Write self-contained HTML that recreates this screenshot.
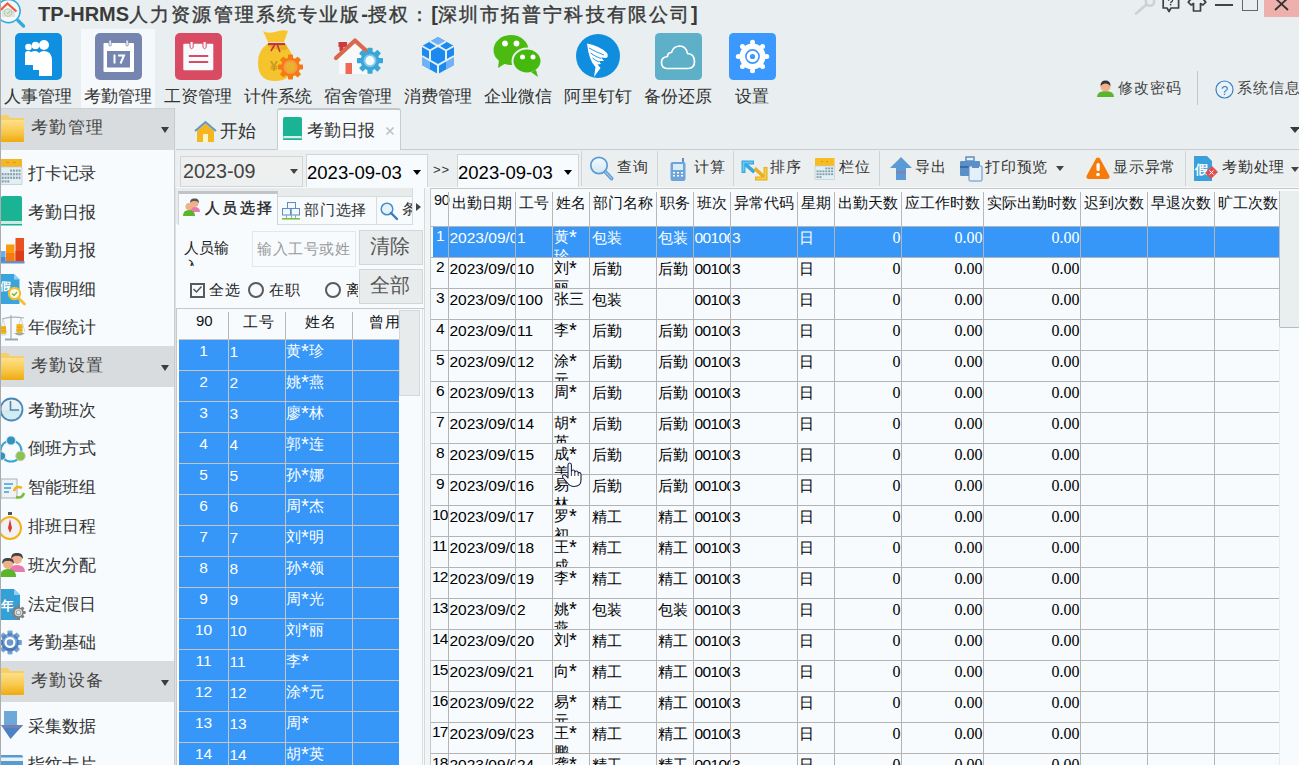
<!DOCTYPE html><html><head><meta charset="utf-8"><style>
*{box-sizing:border-box;margin:0;padding:0}
html,body{width:1299px;height:765px;overflow:hidden}
body{position:relative;background:#e9eff0;font-family:"Liberation Sans",sans-serif;color:#333}
.a{position:absolute}
.nw{white-space:nowrap}
svg{position:absolute;overflow:visible}
.rl{position:absolute;top:86.5px;font-size:17px;line-height:19px;color:#333;white-space:nowrap}
.si{position:absolute;left:27.8px;font-size:17px;line-height:19px;color:#333;white-space:nowrap}
.sh{position:absolute;left:1px;width:173px;height:40px;background:#d9dcde}
.sh span{position:absolute;left:29.5px;top:9.5px;font-size:16.5px;line-height:19px;letter-spacing:1.5px;color:#444;white-space:nowrap}
.tri{position:absolute;width:0;height:0;border-left:5px solid transparent;border-right:5px solid transparent;border-top:6px solid #333}
.tb{position:absolute;top:158px;font-size:15px;line-height:18px;letter-spacing:0.8px;color:#333;white-space:nowrap}
.vsep{position:absolute;width:1px;background:#d0d4d6}
.g{position:absolute;overflow:hidden}
.c{position:absolute;overflow:hidden;white-space:nowrap}
.tc{font-size:18.5px;letter-spacing:2.1px;font-weight:normal;-webkit-text-stroke:0.4px #3a3a3a}
.ast{font-size:20px;line-height:0;vertical-align:-1.5px}
</style></head><body>
<svg style="left:0;top:0" width="27" height="30" viewBox="0 0 27 30">
<circle cx="8.5" cy="11" r="11.6" fill="#f4f8fa" stroke="#2eaadc" stroke-width="1.6"/>
<rect x="2" y="9" width="13" height="8" fill="#dde2e8"/>
<path d="M0.5 10 L7.5 3.5 L16.5 11.5" fill="none" stroke="#f05a40" stroke-width="2.2"/>
<circle cx="8" cy="12.5" r="3.8" fill="none" stroke="#8cc43a" stroke-width="0.9" stroke-dasharray="1.2 0.8"/>
<path d="M6.5 12.5 L7.8 13.8 L10 11" fill="none" stroke="#8cc43a" stroke-width="0.8"/>
<path d="M18 20.5 L23.5 26" stroke="#2eaadc" stroke-width="3.4" stroke-linecap="round"/>
</svg>
<div class="a nw" style="left:38px;top:2px;font-size:20px;line-height:24px;font-weight:bold;color:#3a3a3a">TP-HRMS<span class="tc">人力资源管理系统专业版</span>-<span class="tc">授权：</span>[<span class="tc">深圳市拓普宁科技有限公司</span>]</div>
<svg style="left:1134px;top:0" width="22" height="15" viewBox="0 0 22 15">
<path d="M2 13.5 L12 5" stroke="#cfd2d2" stroke-width="2.6" stroke-linecap="round"/><path d="M4.5 9.5 L6.5 11.5 M7 7.5 L9 9.5" stroke="#cfd2d2" stroke-width="1.6"/><circle cx="16" cy="1.5" r="4.2" fill="none" stroke="#cfd2d2" stroke-width="2.6"/>
</svg>
<svg style="left:1162px;top:0" width="19" height="13" viewBox="0 0 19 13">
<path d="M1.2 -2 V8 H5 L7 11.5 L9 8 H16.6 V-2" fill="none" stroke="#404040" stroke-width="1.7" stroke-linejoin="round"/>
<path d="M6.6 0.8 Q6.8 -1.5 8.6 -1.5 Q10.6 -1.5 10.6 0.2 Q10.6 1.4 9 2.2 L8.6 3" fill="none" stroke="#404040" stroke-width="1.3"/><circle cx="8.6" cy="4.6" r="0.9" fill="#404040"/>
</svg>
<svg style="left:1187px;top:0" width="20" height="13" viewBox="0 0 20 13">
<path d="M4.5 -1.5 Q2.5 0.5 1.2 2.2 L4 5 L6.5 3.5 V11 H13.5 V3.5 L16 5 L18.8 2.2 Q17.5 0.5 15.5 -1.5" fill="none" stroke="#404040" stroke-width="1.7" stroke-linejoin="round"/>
</svg>
<div class="a" style="left:1215px;top:4px;width:18px;height:2px;background:#444"></div>
<div class="a" style="left:1242px;top:-2px;width:16px;height:13px;border:1.5px solid #666"></div>
<div class="a" style="left:1264px;top:0;width:35px;height:17px;background:#eeb0ad"></div>
<svg style="left:1272.5px;top:0" width="18" height="11" viewBox="0 0 18 11">
<path d="M2 -2 L15 10 M15 -2 L2 10" stroke="#333" stroke-width="1.8"/>
</svg>
<div class="a" style="left:81px;top:29px;width:74px;height:79px;background:#f6f9fc"></div>
<div class="rl" style="left:3.5px">人事管理</div>
<div class="rl" style="left:83.5px">考勤管理</div>
<div class="rl" style="left:163.5px">工资管理</div>
<div class="rl" style="left:243.5px">计件系统</div>
<div class="rl" style="left:323.5px">宿舍管理</div>
<div class="rl" style="left:403.5px">消费管理</div>
<div class="rl" style="left:483.5px">企业微信</div>
<div class="rl" style="left:563.5px">阿里钉钉</div>
<div class="rl" style="left:643.5px">备份还原</div>
<div class="rl" style="left:734.5px">设置</div>
<svg style="left:15px;top:33px" width="47" height="47" viewBox="0 0 47 47"><rect x="0" y="0" width="47" height="47" rx="5" fill="#0f8fdf"/><circle cx="13.5" cy="14" r="3.3" fill="#fff"/><circle cx="20.5" cy="12.5" r="3.8" fill="#fff"/><circle cx="29" cy="12" r="5" fill="#fff"/>
<path d="M10 21 Q10 18 13 18 Q15 18 16 19 Q18 18 20 18 Q23 18 24 20 Q26 18 29 18 Q37 18 37 28 V43 H24 V37 H18 V32 H10 Z" fill="#fff"/></svg>
<svg style="left:95px;top:33px" width="47" height="47" viewBox="0 0 47 47"><rect x="0" y="0" width="47" height="47" rx="5" fill="#7585b0"/><rect x="8.5" y="10" width="30.5" height="29" rx="1" fill="#fff"/><rect x="14" y="7" width="2.2" height="6" rx="1" fill="#fff" stroke="#7585b0" stroke-width="0.8"/><rect x="31" y="7" width="2.2" height="6" rx="1" fill="#fff" stroke="#7585b0" stroke-width="0.8"/>
<rect x="12" y="18" width="23" height="16.5" fill="#7585b0"/><rect x="18.5" y="21.5" width="2" height="9" fill="#fff"/><path d="M23 22.5 H29 L25.5 30.5" fill="none" stroke="#fff" stroke-width="2"/></svg>
<svg style="left:175px;top:33px" width="47" height="47" viewBox="0 0 47 47"><rect x="0" y="0" width="47" height="47" rx="5" fill="#d94b62"/><rect x="8.3" y="10.7" width="30" height="26.5" rx="1" fill="#f7fbfe"/><path d="M15 9 V14.5 Q16.6 17 18.2 14.5 V9" fill="#f7fbfe" stroke="#d94b62" stroke-width="1"/><path d="M28 9 V14.5 Q29.6 17 31.2 14.5 V9" fill="#f7fbfe" stroke="#d94b62" stroke-width="1"/>
<path d="M14.5 23 H32.5 M14.5 29 H32.5" stroke="#d94b62" stroke-width="1.8" stroke-linecap="round"/></svg>
<svg style="left:240px;top:25px" width="80" height="60" viewBox="0 0 80 60"><path d="M23 6 Q27 9 35 7 Q42 4 48 6 L44 17 H28 Z" fill="#f7c52e"/><path d="M28 19 Q18 24 18 38 Q18 56 35 56 Q52 56 53 40 Q53 24 43 19 Z" fill="#f5c42c"/><path d="M26 19 Q36 28 48 24 L46 19 Z" fill="#e8b020"/><path d="M28 19 H45" stroke="#c8343a" stroke-width="2.2"/><path d="M35 19 L31 26 M37 19 L40 27" stroke="#c8343a" stroke-width="1.6"/><text x="30" y="46" font-size="14" font-weight="bold" fill="#c89a20" font-family="Liberation Sans">¥</text><circle cx="50.5" cy="42" r="9.5" fill="#f67a12"/><rect x="48.0" y="29.5" width="5" height="5.0" rx="0.8" fill="#f67a12" transform="rotate(0.0 50.5 42)"/><rect x="48.0" y="29.5" width="5" height="5.0" rx="0.8" fill="#f67a12" transform="rotate(45.0 50.5 42)"/><rect x="48.0" y="29.5" width="5" height="5.0" rx="0.8" fill="#f67a12" transform="rotate(90.0 50.5 42)"/><rect x="48.0" y="29.5" width="5" height="5.0" rx="0.8" fill="#f67a12" transform="rotate(135.0 50.5 42)"/><rect x="48.0" y="29.5" width="5" height="5.0" rx="0.8" fill="#f67a12" transform="rotate(180.0 50.5 42)"/><rect x="48.0" y="29.5" width="5" height="5.0" rx="0.8" fill="#f67a12" transform="rotate(225.0 50.5 42)"/><rect x="48.0" y="29.5" width="5" height="5.0" rx="0.8" fill="#f67a12" transform="rotate(270.0 50.5 42)"/><rect x="48.0" y="29.5" width="5" height="5.0" rx="0.8" fill="#f67a12" transform="rotate(315.0 50.5 42)"/><circle cx="50.5" cy="42" r="7" fill="#f79a4a"/><circle cx="50.5" cy="42" r="4.8" fill="#e8b42a"/></svg>
<svg style="left:330px;top:35px" width="50" height="45" viewBox="0 0 50 45"><path d="M9 20 L25 5 L42 20 V39 H9 Z" fill="#f7f9fb"/><rect x="8.5" y="7" width="8.5" height="5" fill="#cc3a3a"/><rect x="9.5" y="7" width="4" height="9" fill="#cc3a3a"/><path d="M6 23 L25 5.5 L43 22" fill="none" stroke="#d8694e" stroke-width="4.2" stroke-linejoin="round" stroke-linecap="round"/><rect x="15.5" y="28" width="6.5" height="11" fill="#ee6a55"/><circle cx="40" cy="25.7" r="9.5" fill="#3aa6d8"/><rect x="37.4" y="12.7" width="5.2" height="5.5" rx="0.8" fill="#3aa6d8" transform="rotate(0.0 40 25.7)"/><rect x="37.4" y="12.7" width="5.2" height="5.5" rx="0.8" fill="#3aa6d8" transform="rotate(45.0 40 25.7)"/><rect x="37.4" y="12.7" width="5.2" height="5.5" rx="0.8" fill="#3aa6d8" transform="rotate(90.0 40 25.7)"/><rect x="37.4" y="12.7" width="5.2" height="5.5" rx="0.8" fill="#3aa6d8" transform="rotate(135.0 40 25.7)"/><rect x="37.4" y="12.7" width="5.2" height="5.5" rx="0.8" fill="#3aa6d8" transform="rotate(180.0 40 25.7)"/><rect x="37.4" y="12.7" width="5.2" height="5.5" rx="0.8" fill="#3aa6d8" transform="rotate(225.0 40 25.7)"/><rect x="37.4" y="12.7" width="5.2" height="5.5" rx="0.8" fill="#3aa6d8" transform="rotate(270.0 40 25.7)"/><rect x="37.4" y="12.7" width="5.2" height="5.5" rx="0.8" fill="#3aa6d8" transform="rotate(315.0 40 25.7)"/><circle cx="40" cy="25.7" r="6.5" fill="#7cc8ec"/><circle cx="40" cy="25.7" r="4.6" fill="#f7f9fb"/></svg>
<svg style="left:410px;top:25px" width="60" height="55" viewBox="0 0 60 55"><path d="M28 12 L44 21 V40 L28 49 L12 40 V21 Z" fill="#1a8af0"/><path d="M28 12 L36 16.5 L28 21 L20 16.5 Z" fill="#70b2f5"/><path d="M12 31 L20 35.5 V44.5 L12 40 Z" fill="#70b2f5"/><path d="M44 31 L36 35.5 V44.5 L44 40 Z" fill="#70b2f5"/><g fill="none" stroke="#e9eff0" stroke-width="2"><path d="M20 16.5 L28 21 L36 16.5"/><path d="M12 21 L20 25.5"/><path d="M44 21 L36 25.5"/><path d="M20 25.5 L28 21 L36 25.5"/><path d="M20 25.5 V35.5 L28 40 L36 35.5 V25.5"/><path d="M12 31 L20 35.5"/><path d="M44 31 L36 35.5"/><path d="M28 40 V49"/></g></svg>
<svg style="left:493px;top:34px" width="52" height="44" viewBox="0 0 52 44">
<ellipse cx="18" cy="16" rx="17.5" ry="15" fill="#4bbb12"/><path d="M6 26 L5 34 L13 29 Z" fill="#4bbb12"/>
<ellipse cx="34" cy="27" rx="14.5" ry="12.5" fill="#45b90e" stroke="#e9eff0" stroke-width="2"/><path d="M43 36 L45 43 L38 38 Z" fill="#45b90e"/>
<circle cx="12" cy="9.5" r="2.9" fill="#fff"/><circle cx="23.5" cy="9.5" r="2.9" fill="#fff"/>
<circle cx="29.5" cy="23" r="2.5" fill="#fff"/><circle cx="40" cy="23" r="2.5" fill="#fff"/>
</svg>
<svg style="left:576px;top:34px" width="44" height="44" viewBox="0 0 44 44">
<circle cx="22" cy="22" r="22" fill="#0f8ee0"/>
<path d="M11 9.5 Q24 12 31 19 Q33 23 30 24 L25 23.5 L28 27 L23 27 L25 30 L21.5 30.5 L24.5 34 L18 43 L19.5 33 Q13 27 11 9.5 Z" fill="#fff"/><path d="M13 14 Q20 18 28 21 M14.5 19 Q20 23 25 24.5 M16.5 24 Q20 27 23 28" fill="none" stroke="#0f8ee0" stroke-width="0.9"/>
</svg>
<svg style="left:655px;top:33px" width="47" height="47" viewBox="0 0 47 47"><rect width="47" height="47" rx="4.5" fill="#5eb0c8"/><path d="M12 35.5 Q6.5 35.5 6.5 29.5 Q6.5 24 12.5 23.5 Q12.5 19.5 16.5 19.5 Q18 13.5 24.5 13 Q31 13 32.5 20.5 Q39.5 21 39.5 28.5 Q39.5 35.5 33 35.5 Z" fill="none" stroke="#fff" stroke-width="1.7" stroke-linejoin="round"/></svg>
<svg style="left:729px;top:33px" width="47" height="47" viewBox="0 0 47 47"><rect width="47" height="47" rx="4.5" fill="#3a98fe"/><circle cx="23.5" cy="23.5" r="13" fill="#fff"/><circle cx="23.50" cy="9.30" r="2.5" fill="#fff"/><circle cx="33.54" cy="13.46" r="2.5" fill="#fff"/><circle cx="37.70" cy="23.50" r="2.5" fill="#fff"/><circle cx="33.54" cy="33.54" r="2.5" fill="#fff"/><circle cx="23.50" cy="37.70" r="2.5" fill="#fff"/><circle cx="13.46" cy="33.54" r="2.5" fill="#fff"/><circle cx="9.30" cy="23.50" r="2.5" fill="#fff"/><circle cx="13.46" cy="13.46" r="2.5" fill="#fff"/><circle cx="23.5" cy="23.5" r="6.6" fill="none" stroke="#3a98fe" stroke-width="1.6"/><circle cx="23.5" cy="23.5" r="2.6" fill="#3a98fe"/></svg>
<svg style="left:1096px;top:80px" width="19" height="18" viewBox="0 0 19 18">
<path d="M1 17 Q1 11 9.5 11 Q18 11 18 17 Z" fill="#5bb52a"/><circle cx="9.5" cy="6.5" r="5" fill="#f3b08a"/><path d="M4.5 6 Q4.5 0.5 9.5 0.5 Q14.5 0.5 14.5 6 Q12 3 9.5 3.5 Q7 3 4.5 6Z" fill="#333"/>
</svg>
<div class="a nw" style="left:1117.5px;top:79px;font-size:15px;line-height:17px;letter-spacing:1.1px;color:#444">修改密码</div>
<div class="a" style="left:1197px;top:71px;width:1px;height:34px;background:#c4c8ca"></div>
<svg style="left:1215px;top:80px" width="19" height="19" viewBox="0 0 19 19">
<circle cx="9.5" cy="9.5" r="8.5" fill="#e8f2fa" stroke="#3b7fc0" stroke-width="1.2"/><text x="9.5" y="14.5" font-size="13" text-anchor="middle" fill="#3b7fc0" font-family="Liberation Sans">?</text>
</svg>
<div class="a nw" style="left:1236.5px;top:79px;font-size:15px;line-height:17px;letter-spacing:1.1px;color:#444">系统信息</div>
<div class="a" style="left:1px;top:108px;width:173px;height:657px;background:#f7fbfe"></div>
<div class="a" style="left:174px;top:108px;width:1px;height:657px;background:#c8cccf"></div>
<div class="a" style="left:175px;top:108px;width:1px;height:657px;background:#e8eced"></div>
<div class="sh" style="top:108px;height:42px;border-top:1px solid #cdd1d3"><span style="top:8.5px">考勤管理</span></div>
<svg style="left:1px;top:114px" width="23" height="28" viewBox="0 0 23 28">
<defs><linearGradient id="fg114" x1="0" y1="0" x2="0" y2="1"><stop offset="0" stop-color="#fde08a"/><stop offset="0.55" stop-color="#f8c84a"/><stop offset="1" stop-color="#eeaa10"/></linearGradient></defs>
<path d="M0 1 H7 L9 4 H23 V28 H0 Z" fill="#f6cf6a"/><rect x="0" y="6" width="23" height="22" rx="1.5" fill="url(#fg114)"/>
</svg>
<div class="tri" style="left:160.8px;top:127px;border-left-width:4.7px;border-right-width:4.7px;border-top-color:#3c3c3c"></div>
<div class="sh" style="top:346px;height:41px;"><span style="">考勤设置</span></div>
<svg style="left:1px;top:352px" width="23" height="28" viewBox="0 0 23 28">
<defs><linearGradient id="fg352" x1="0" y1="0" x2="0" y2="1"><stop offset="0" stop-color="#fde08a"/><stop offset="0.55" stop-color="#f8c84a"/><stop offset="1" stop-color="#eeaa10"/></linearGradient></defs>
<path d="M0 1 H7 L9 4 H23 V28 H0 Z" fill="#f6cf6a"/><rect x="0" y="6" width="23" height="22" rx="1.5" fill="url(#fg352)"/>
</svg>
<div class="tri" style="left:160.8px;top:365px;border-left-width:4.7px;border-right-width:4.7px;border-top-color:#3c3c3c"></div>
<div class="sh" style="top:661px;height:41px;"><span style="">考勤设备</span></div>
<svg style="left:1px;top:667px" width="23" height="28" viewBox="0 0 23 28">
<defs><linearGradient id="fg667" x1="0" y1="0" x2="0" y2="1"><stop offset="0" stop-color="#fde08a"/><stop offset="0.55" stop-color="#f8c84a"/><stop offset="1" stop-color="#eeaa10"/></linearGradient></defs>
<path d="M0 1 H7 L9 4 H23 V28 H0 Z" fill="#f6cf6a"/><rect x="0" y="6" width="23" height="22" rx="1.5" fill="url(#fg667)"/>
</svg>
<div class="tri" style="left:160.8px;top:680px;border-left-width:4.7px;border-right-width:4.7px;border-top-color:#3c3c3c"></div>
<div class="si" style="top:163.7px">打卡记录</div>
<div class="si" style="top:202.7px">考勤日报</div>
<div class="si" style="top:241.2px">考勤月报</div>
<div class="si" style="top:279.7px">请假明细</div>
<div class="si" style="top:317.7px">年假统计</div>
<div class="si" style="top:400.7px">考勤班次</div>
<div class="si" style="top:439.4px">倒班方式</div>
<div class="si" style="top:477.7px">智能班组</div>
<div class="si" style="top:516.7px">排班日程</div>
<div class="si" style="top:555.7px">班次分配</div>
<div class="si" style="top:594.7px">法定假日</div>
<div class="si" style="top:633.3000000000001px">考勤基础</div>
<div class="si" style="top:716.7px">采集数据</div>
<div class="si" style="top:755.2px">指纹卡片</div>
<svg style="left:1px;top:158px" width="22" height="27" viewBox="0 0 22 27"><rect x="0" y="1" width="21" height="8" fill="#f4b622"/><path d="M5 4.5 H8 M12 4.5 H15" stroke="#d89a10" stroke-width="1"/><rect x="0" y="9" width="21" height="17.5" fill="#dff0f4" stroke="#c4ccd0" stroke-width="0.8"/><rect x="9.2" y="11.5" width="1.9" height="2.2" fill="#8e9aa8"/><rect x="12.0" y="11.5" width="1.9" height="2.2" fill="#8e9aa8"/><rect x="14.8" y="11.5" width="1.9" height="2.2" fill="#8e9aa8"/><rect x="17.6" y="11.5" width="1.9" height="2.2" fill="#8e9aa8"/><rect x="0.8" y="15.1" width="1.9" height="2.2" fill="#8e9aa8"/><rect x="3.6" y="15.1" width="1.9" height="2.2" fill="#8e9aa8"/><rect x="6.4" y="15.1" width="1.9" height="2.2" fill="#8e9aa8"/><rect x="9.2" y="15.1" width="1.9" height="2.2" fill="#8e9aa8"/><rect x="12.0" y="15.1" width="1.9" height="2.2" fill="#8e9aa8"/><rect x="14.8" y="15.1" width="1.9" height="2.2" fill="#8e9aa8"/><rect x="17.6" y="15.1" width="1.9" height="2.2" fill="#8e9aa8"/><rect x="0.8" y="18.7" width="1.9" height="2.2" fill="#8e9aa8"/><rect x="3.6" y="18.7" width="1.9" height="2.2" fill="#8e9aa8"/><rect x="6.4" y="18.7" width="1.9" height="2.2" fill="#8e9aa8"/><rect x="9.2" y="18.7" width="1.9" height="2.2" fill="#8e9aa8"/><rect x="12.0" y="18.7" width="1.9" height="2.2" fill="#8e9aa8"/><rect x="14.8" y="18.7" width="1.9" height="2.2" fill="#8e9aa8"/><rect x="17.6" y="18.7" width="1.9" height="2.2" fill="#8e9aa8"/><rect x="0.8" y="22.3" width="1.9" height="2.2" fill="#8e9aa8"/><rect x="3.6" y="22.3" width="1.9" height="2.2" fill="#8e9aa8"/><rect x="6.4" y="22.3" width="1.9" height="2.2" fill="#8e9aa8"/></svg>
<svg style="left:1px;top:196px" width="22" height="30" viewBox="0 0 22 30"><rect x="0" y="0" width="21" height="27" rx="2" fill="#1ab394"/><rect x="0" y="25" width="21" height="3" fill="#cfe9e0"/><rect x="0" y="28" width="21" height="1.5" fill="#1ab394"/></svg>
<svg style="left:1px;top:236px" width="25" height="30" viewBox="0 0 25 30"><rect x="0" y="15" width="4.5" height="10" fill="#6aaee8"/><rect x="0" y="21" width="4.5" height="4" fill="#4a8ed0"/><rect x="5" y="8.5" width="8.5" height="16.5" fill="#fb9a10"/><rect x="5" y="17" width="8.5" height="8" fill="#f57a10"/><rect x="14.5" y="2" width="8.5" height="23" fill="#ea5020"/><rect x="14.5" y="15" width="8.5" height="10" fill="#de3c18"/><rect x="0" y="25" width="23.5" height="2.5" fill="#6a8fc0"/></svg>
<svg style="left:1px;top:273px" width="26" height="33" viewBox="0 0 26 33"><path d="M0 1 H13 L18.5 6.5 V31 H0 Z" fill="#3aa4dc"/><path d="M13 1 V6.5 H18.5 Z" fill="#8ed0f0"/><text x="-1" y="17" font-size="11" fill="#fff" font-family="Liberation Sans" font-weight="bold">假</text><circle cx="13.5" cy="20.5" r="5.6" fill="#fffbe8" stroke="#f5c030" stroke-width="2.2"/><path d="M17.5 25 L23.5 31" stroke="#f5c030" stroke-width="2.8" stroke-linecap="round"/><path d="M11 20.5 L13 22.5 L16 19" fill="none" stroke="#6ab04a" stroke-width="1.2"/></svg>
<svg style="left:0px;top:314px" width="27" height="28" viewBox="0 0 27 28"><path d="M11 1 V25" stroke="#b8c0c6" stroke-width="1.6"/><path d="M5 25.5 H18" stroke="#9aa8b0" stroke-width="2"/><path d="M2 5 Q11 2 24 4" fill="none" stroke="#a8b2b8" stroke-width="1.2"/><path d="M3 5 L0 19 M3 5 L7 19 M21 4 L16 18 M21 4 L25 18" stroke="#c0c8cc" stroke-width="0.7"/><rect x="1" y="12" width="5" height="8" fill="#f5b820"/><rect x="16.5" y="10" width="6" height="9" fill="#f5b820"/><path d="M1 14 H6 M1 17 H6 M16.5 13 H22.5 M16.5 16 H22.5" stroke="#d89810" stroke-width="0.8"/><path d="M-1 20 Q3.5 24 8 20 Z" fill="#dfe6ea"/><path d="M14 19 Q19.5 24 25 19 Z" fill="#9aaab4"/></svg>
<svg style="left:0px;top:397px" width="26" height="26" viewBox="0 0 26 26"><defs><linearGradient id="clk" x1="0" y1="0" x2="0" y2="1"><stop offset="0" stop-color="#eef4f6"/><stop offset="0.5" stop-color="#e4eef0"/><stop offset="0.55" stop-color="#cfe8ee"/><stop offset="1" stop-color="#d8eef4"/></linearGradient></defs><circle cx="11.5" cy="12.5" r="11" fill="url(#clk)" stroke="#4a88b8" stroke-width="1.8"/><path d="M10.5 4 V13 H19" fill="none" stroke="#4a88b8" stroke-width="1.6"/></svg>
<svg style="left:0px;top:434px" width="27" height="30" viewBox="0 0 27 30"><circle cx="11" cy="17" r="10.5" fill="none" stroke="#3aa4d4" stroke-width="2"/><circle cx="11" cy="6.5" r="4.6" fill="#2f94c0" stroke="#e8eef0" stroke-width="1"/><circle cx="1.5" cy="22" r="4.2" fill="#2f94c0" stroke="#e8eef0" stroke-width="1"/><circle cx="20.5" cy="22" r="4.8" fill="#8cc44a" stroke="#c8d0d0" stroke-width="1"/></svg>
<svg style="left:1px;top:476px" width="26" height="26" viewBox="0 0 26 26"><rect x="0" y="3" width="16" height="19" fill="#eef2f4" stroke="#aab4ba" stroke-width="1"/><path d="M3 8 H12 M3 12 H10 M3 16 H8" stroke="#3aa0dc" stroke-width="1.5"/><path d="M13 15 Q15 9 21 12" fill="none" stroke="#f3b21a" stroke-width="2.5"/><path d="M23 17 Q21 23 15 21" fill="none" stroke="#7cbc3a" stroke-width="2.5"/></svg>
<svg style="left:0px;top:510px" width="26" height="32" viewBox="0 0 26 32"><circle cx="10" cy="18" r="11" fill="#f2f2f2" stroke="#f3b21a" stroke-width="2"/><rect x="8" y="2" width="4" height="3" fill="#555"/><path d="M10 9 L12 18 L10 23 L8 18 Z" fill="#d43a3a"/></svg>
<svg style="left:0px;top:550px" width="26" height="28" viewBox="0 0 26 28"><circle cx="17" cy="9" r="5" fill="#f0b08a"/><path d="M11 9 Q11 2 17 3 Q23 2 23 9 Q20 5 17 6 Q14 5 11 9Z" fill="#444"/><path d="M9 22 Q9 15 17 15 Q25 15 25 22 Z" fill="#e77bb0"/><circle cx="8" cy="14" r="5" fill="#f0b08a"/><path d="M2 14 Q2 7 8 8 Q14 7 14 14 Q11 10 8 11 Q5 10 2 14Z" fill="#444"/><path d="M0 27 Q0 19 8 19 Q16 19 16 27 Z" fill="#5bb52a"/></svg>
<svg style="left:1px;top:588px" width="27" height="34" viewBox="0 0 27 34"><path d="M0 1 H13 L19 7 V32 H0 Z" fill="#35a0d8"/><path d="M13 1 V7 H19 Z" fill="#90d0f0"/><text x="0" y="22" font-size="13" fill="#fff" font-family="Liberation Sans" font-weight="bold">年</text><circle cx="17.5" cy="24.5" r="5.2" fill="#7a7f84"/><rect x="16.0" y="17.3" width="3" height="4.0" rx="0.8" fill="#7a7f84" transform="rotate(0.0 17.5 24.5)"/><rect x="16.0" y="17.3" width="3" height="4.0" rx="0.8" fill="#7a7f84" transform="rotate(45.0 17.5 24.5)"/><rect x="16.0" y="17.3" width="3" height="4.0" rx="0.8" fill="#7a7f84" transform="rotate(90.0 17.5 24.5)"/><rect x="16.0" y="17.3" width="3" height="4.0" rx="0.8" fill="#7a7f84" transform="rotate(135.0 17.5 24.5)"/><rect x="16.0" y="17.3" width="3" height="4.0" rx="0.8" fill="#7a7f84" transform="rotate(180.0 17.5 24.5)"/><rect x="16.0" y="17.3" width="3" height="4.0" rx="0.8" fill="#7a7f84" transform="rotate(225.0 17.5 24.5)"/><rect x="16.0" y="17.3" width="3" height="4.0" rx="0.8" fill="#7a7f84" transform="rotate(270.0 17.5 24.5)"/><rect x="16.0" y="17.3" width="3" height="4.0" rx="0.8" fill="#7a7f84" transform="rotate(315.0 17.5 24.5)"/><circle cx="17.5" cy="24.5" r="3.8" fill="#e0d8d0"/><circle cx="17.5" cy="24.5" r="2.6" fill="#9aa0a4"/><circle cx="17.5" cy="24.5" r="1.8" fill="#e6e6e6"/></svg>
<svg style="left:0px;top:629px" width="26" height="28" viewBox="0 0 26 28"><defs><linearGradient id="gbl" x1="0" y1="0" x2="0" y2="1"><stop offset="0" stop-color="#84b0dc"/><stop offset="0.5" stop-color="#6a98cc"/><stop offset="1" stop-color="#3f6fb0"/></linearGradient></defs><circle cx="10" cy="13.5" r="9" fill="url(#gbl)"/><rect x="7.5" y="1.5" width="5" height="5" rx="0.8" fill="url(#gbl)" transform="rotate(0.0 10 13.5)"/><rect x="7.5" y="1.5" width="5" height="5" rx="0.8" fill="url(#gbl)" transform="rotate(45.0 10 13.5)"/><rect x="7.5" y="1.5" width="5" height="5" rx="0.8" fill="url(#gbl)" transform="rotate(90.0 10 13.5)"/><rect x="7.5" y="1.5" width="5" height="5" rx="0.8" fill="url(#gbl)" transform="rotate(135.0 10 13.5)"/><rect x="7.5" y="1.5" width="5" height="5" rx="0.8" fill="url(#gbl)" transform="rotate(180.0 10 13.5)"/><rect x="7.5" y="1.5" width="5" height="5" rx="0.8" fill="url(#gbl)" transform="rotate(225.0 10 13.5)"/><rect x="7.5" y="1.5" width="5" height="5" rx="0.8" fill="url(#gbl)" transform="rotate(270.0 10 13.5)"/><rect x="7.5" y="1.5" width="5" height="5" rx="0.8" fill="url(#gbl)" transform="rotate(315.0 10 13.5)"/><circle cx="10" cy="13.5" r="5.5" fill="#fff"/><circle cx="10" cy="13.5" r="3.3" fill="#6a98cc"/></svg>
<svg style="left:0px;top:711px" width="24" height="30" viewBox="0 0 24 30"><rect x="4" y="0" width="13" height="15" fill="#6ea8d8"/><path d="M1 14 H23 L10.5 28 Z" fill="#4a82c2"/><path d="M1 14 H23 L20.5 17 H3.5 Z" fill="#7480b8"/></svg>
<svg style="left:0px;top:755px" width="24" height="14" viewBox="0 0 24 14"><rect x="0" y="0" width="23" height="14" rx="2" fill="#5b9ad0"/><rect x="0" y="2.5" width="23" height="3.5" fill="#e6f4f8"/></svg>
<div class="a" style="left:176px;top:149px;width:1123px;height:616px;background:#eceff0;border-top:1px solid #c8ccd0"></div>
<svg style="left:194px;top:120px" width="23" height="23" viewBox="0 0 23 23">
<path d="M3 10 L11.5 3 L20 10 V22 H3 Z" fill="#f4b622"/><path d="M1 11 L11.5 2 L22 11" fill="none" stroke="#5a9ad0" stroke-width="1.8"/>
<rect x="9" y="14" width="5" height="8" fill="#fff3c0"/></svg>
<div class="a nw" style="left:220px;top:121.5px;font-size:17.5px;line-height:19px;color:#333">开始</div>
<div class="a" style="left:277px;top:108px;width:124px;height:42px;background:#f7fbfe;border:1px solid #c8ccd0;border-top:2px solid #c4c8cb;border-bottom:none;border-radius:3px 3px 0 0"></div>
<svg style="left:283px;top:117px" width="20" height="24" viewBox="0 0 20 24"><rect x="0" y="0" width="19" height="22" rx="2" fill="#1ab394"/><rect x="0.5" y="19" width="18" height="2.5" fill="#d8eee6"/><rect x="0" y="21.5" width="19" height="1.5" fill="#1ab394"/></svg>
<div class="a nw" style="left:306.5px;top:121px;font-size:17px;line-height:19px;color:#333">考勤日报</div>
<svg style="left:386px;top:126.5px" width="8" height="8" viewBox="0 0 8 8"><path d="M0.5 0.5 L7.5 7.5 M7.5 0.5 L0.5 7.5" stroke="#bcc0c2" stroke-width="1.6"/></svg>
<div class="tri" style="left:1290px;top:127px;border-top-color:#3a3a3a"></div>
<div class="a" style="left:176px;top:187px;width:1123px;height:1px;background:#f7f9fa"></div>
<div class="a" style="left:176px;top:188px;width:1123px;height:577px;background:#f2f5f6"></div>
<div class="a" style="left:180px;top:156px;width:123px;height:31px;background:#eef0f0;border:1px solid #d2d6d8"></div>
<div class="a nw" style="left:183px;top:158.5px;font-size:21px;line-height:24px;color:#444;transform:scaleX(0.94);transform-origin:0 0">2023-09</div>
<div class="tri" style="left:289.5px;top:169px;border-left-width:4.5px;border-right-width:4.5px;border-top-width:5px;border-top-color:#444"></div>
<div class="a" style="left:305.5px;top:154px;width:122px;height:33px;background:#f7fbfe;border:1px solid #d2d6d8;border-bottom:none"></div>
<div class="a nw" style="left:307px;top:161px;font-size:19px;line-height:24px;color:#000;transform:scaleX(0.975);transform-origin:0 0">2023-09-03</div>
<div class="tri" style="left:413px;top:170px;border-left-width:4.5px;border-right-width:4.5px;border-top-width:5px;border-top-color:#000"></div>
<div class="a nw" style="left:433px;top:162px;font-size:13px;line-height:16px;letter-spacing:1px;color:#333">&gt;&gt;</div>
<div class="a" style="left:457px;top:154px;width:122px;height:33px;background:#f7fbfe;border:1px solid #d2d6d8;border-bottom:none"></div>
<div class="a nw" style="left:458px;top:161px;font-size:19px;line-height:24px;color:#000;transform:scaleX(0.975);transform-origin:0 0">2023-09-03</div>
<div class="tri" style="left:564px;top:169.5px;border-left-width:4.5px;border-right-width:4.5px;border-top-width:5px;border-top-color:#000"></div>
<div class="vsep" style="left:581px;top:151px;height:35px"></div>
<div class="vsep" style="left:657px;top:151px;height:35px"></div>
<div class="vsep" style="left:733px;top:151px;height:35px"></div>
<div class="vsep" style="left:879px;top:151px;height:35px"></div>
<div class="vsep" style="left:1185px;top:151px;height:35px"></div>
<svg style="left:589px;top:156px" width="25" height="25" viewBox="0 0 25 25"><defs><linearGradient id="mg" x1="0" y1="0" x2="0" y2="1"><stop offset="0" stop-color="#f4fafe"/><stop offset="1" stop-color="#cfe6f4"/></linearGradient></defs><circle cx="10" cy="9.5" r="8.2" fill="url(#mg)" stroke="#5b9ad2" stroke-width="1.7"/><path d="M16.5 16 L22.5 22.5" stroke="#5b9ad2" stroke-width="3.8" stroke-linecap="round"/><path d="M16.5 16 L22.5 22.5" stroke="#9cc8ea" stroke-width="1.2" stroke-linecap="round"/></svg>
<div class="tb" style="left:617px">查询</div>
<svg style="left:670px;top:158px" width="16" height="24" viewBox="0 0 16 24"><rect x="12" y="0" width="2" height="5" fill="#5b8fc7"/><rect x="0.5" y="4" width="15" height="19" rx="2" fill="#6fa4d8"/><rect x="3" y="6" width="10" height="6" fill="#d8ecf8"/><g fill="#fff"><rect x="3" y="14" width="2" height="1.5"/><rect x="7" y="14" width="2" height="1.5"/><rect x="11" y="14" width="2" height="1.5"/><rect x="3" y="17" width="2" height="1.5"/><rect x="7" y="17" width="2" height="1.5"/><rect x="11" y="17" width="2" height="1.5"/></g></svg>
<div class="tb" style="left:694px">计算</div>
<svg style="left:741px;top:160px" width="28" height="22" viewBox="0 0 28 22"><g fill="none" stroke-linecap="square"><path d="M2.5 11 V2.5 H11" stroke="#3aa8e0" stroke-width="4"/><path d="M3 3 L12 11" stroke="#3aa8e0" stroke-width="3.6"/><path d="M2.5 11 V2.5 H11" stroke="#6cc8f4" stroke-width="1.6"/><path d="M24.5 9 V18.5 H16" stroke="#e8b020" stroke-width="4"/><path d="M24 18 L15 9.5" stroke="#e8b020" stroke-width="3.6"/><path d="M24.5 9 V18.5 H16" stroke="#f8d050" stroke-width="1.6"/></g></svg>
<div class="tb" style="left:770px">排序</div>
<svg style="left:815px;top:157px" width="20" height="24" viewBox="0 0 20 24"><rect x="0" y="1" width="19.5" height="8" fill="#f6bc22"/><path d="M6 4.5 H8 M11 4.5 H13" stroke="#d89a10" stroke-width="1"/><rect x="0" y="9" width="19.5" height="13.5" fill="#dcf0f6" stroke="#c4ccd0" stroke-width="0.7"/><rect x="10.3" y="10.5" width="2" height="1.8" fill="#8e9aa8"/><rect x="13.2" y="10.5" width="2" height="1.8" fill="#8e9aa8"/><rect x="16.1" y="10.5" width="2" height="1.8" fill="#8e9aa8"/><rect x="1.6" y="13.4" width="2" height="1.8" fill="#8e9aa8"/><rect x="4.5" y="13.4" width="2" height="1.8" fill="#8e9aa8"/><rect x="7.4" y="13.4" width="2" height="1.8" fill="#8e9aa8"/><rect x="10.3" y="13.4" width="2" height="1.8" fill="#8e9aa8"/><rect x="13.2" y="13.4" width="2" height="1.8" fill="#8e9aa8"/><rect x="16.1" y="13.4" width="2" height="1.8" fill="#8e9aa8"/><rect x="1.6" y="16.3" width="2" height="1.8" fill="#8e9aa8"/><rect x="4.5" y="16.3" width="2" height="1.8" fill="#8e9aa8"/><rect x="7.4" y="16.3" width="2" height="1.8" fill="#8e9aa8"/><rect x="10.3" y="16.3" width="2" height="1.8" fill="#8e9aa8"/><rect x="13.2" y="16.3" width="2" height="1.8" fill="#8e9aa8"/><rect x="16.1" y="16.3" width="2" height="1.8" fill="#8e9aa8"/><rect x="1.6" y="19.2" width="2" height="1.8" fill="#8e9aa8"/><rect x="4.5" y="19.2" width="2" height="1.8" fill="#8e9aa8"/></svg>
<div class="tb" style="left:839px">栏位</div>
<svg style="left:890px;top:157px" width="22" height="23" viewBox="0 0 22 23"><path d="M11 0 L22 11 H16 V23 H6 V11 H0 Z" fill="#5b9bd5"/><rect x="6" y="14" width="10" height="3" fill="#7a88b8"/></svg>
<div class="tb" style="left:915px">导出</div>
<svg style="left:960px;top:157px" width="23" height="24" viewBox="0 0 23 24"><rect x="6" y="0" width="8" height="4" fill="none" stroke="#5b8fc7" stroke-width="1.5"/><rect x="0" y="4" width="20" height="15" rx="1" fill="#5b8fc7"/><rect x="0" y="9" width="20" height="2" fill="#3a6aa0"/><rect x="9" y="9" width="13" height="15" rx="1" fill="#e4f0f8" stroke="#5b8fc7" stroke-width="1"/><rect x="12" y="8" width="7" height="3" fill="#5b8fc7"/></svg>
<div class="tb" style="left:985px">打印预览</div>
<div class="tri" style="left:1056px;top:165.5px;border-left-width:4.5px;border-right-width:4.5px;border-top-width:5px;border-top-color:#444"></div>
<svg style="left:1086px;top:157px" width="24" height="22" viewBox="0 0 24 22"><path d="M12 1 Q13 0 14 1.5 L23.5 19 Q24 22 21 22 H3 Q0 22 0.5 19 L10 1.5 Q11 0 12 1Z" fill="#f77b0a"/><rect x="10.5" y="6" width="3.2" height="8" rx="1.5" fill="#fff"/><circle cx="12" cy="17.5" r="1.8" fill="#fff"/></svg>
<div class="tb" style="left:1113px">显示异常</div>
<svg style="left:1194px;top:156px" width="26" height="26" viewBox="0 0 26 26"><path d="M0 0 H13 L18 5 V25 H0 Z" fill="#3aa0dc"/><text x="0.5" y="18" font-size="13" font-weight="bold" fill="#fff" font-family="Liberation Sans">假</text><path d="M18 10 L24 16 L17 23 L11 17 Z" fill="#e05050"/><path d="M15.5 14.5 L19.5 18.5 M19.5 14.5 L15.5 18.5" stroke="#fff" stroke-width="1"/></svg>
<div class="tb" style="left:1222px">考勤处理</div>
<div class="tri" style="left:1291px;top:167px;border-left-width:4.5px;border-right-width:4.5px;border-top-width:5px;border-top-color:#444"></div>
<div class="a" style="left:175px;top:188px;width:250px;height:577px;background:#f7fbfe;border-left:1px solid #dde1e3;border-right:1px solid #d6dadc;border-top:1px solid #e2e5e7"></div>
<div class="a" style="left:176px;top:188px;width:248px;height:36px;background:#e8ebec"></div>
<div class="a" style="left:277px;top:196px;width:100px;height:29px;background:#f7fbfe;border:1px solid #d8dcde"></div>
<div class="a" style="left:376px;top:196px;width:37px;height:29px;background:#f7fbfe;border:1px solid #d8dcde;border-right:none"></div>
<div class="a" style="left:412px;top:188px;width:12px;height:36px;background:#f7fbfe;border-left:1px solid #d8dcde"></div>
<div class="a" style="left:416px;top:203px;width:0;height:0;border-top:4px solid transparent;border-bottom:4px solid transparent;border-left:5px solid #444"></div>
<div class="a" style="left:178px;top:191px;width:100px;height:34px;background:#f7fbfe;border-top:3px solid #c0c4c7;border-left:1px solid #d0d4d6;border-right:1px solid #d0d4d6"></div>
<svg style="left:183px;top:198px" width="18" height="18" viewBox="0 0 18 18"><circle cx="11.5" cy="5" r="4" fill="#f0b08a"/><path d="M7 5 Q7 0 11.5 0.5 Q16 0 16 5 Q14 2.5 11.5 3 Q9 2.5 7 5Z" fill="#555"/><path d="M6 14 Q6 9 11.5 9 Q17 9 17 14 Z" fill="#e77bb0"/><circle cx="6" cy="8.5" r="3.6" fill="#f0b08a"/><path d="M0 18 Q0 12 6 12 Q12 12 12 18 Z" fill="#5bb52a"/></svg>
<div class="a nw" style="left:204.5px;top:199.5px;font-size:14.5px;line-height:17px;letter-spacing:2.6px;-webkit-text-stroke:0.35px #222;color:#222">人员选择</div>
<svg style="left:282px;top:202px" width="18" height="18" viewBox="0 0 18 18"><rect x="5.5" y="0.5" width="8" height="6.5" fill="#f4f8fc" stroke="#5a8ec8" stroke-width="1"/><rect x="0.5" y="6.5" width="8" height="6.5" fill="#f4f8fc" stroke="#5a8ec8" stroke-width="1"/><rect x="9.5" y="6.5" width="8" height="6.5" fill="#f4f8fc" stroke="#5a8ec8" stroke-width="1"/><path d="M4.5 13 V16.5 M9.5 7 V16.5 M13.5 13 V16.5" stroke="#8aa8c8" stroke-width="1"/><path d="M0 16.8 H18" stroke="#7cc040" stroke-width="1.6"/></svg>
<div class="a nw" style="left:304px;top:201px;font-size:15px;line-height:17px;letter-spacing:0.8px;color:#333">部门选择</div>
<svg style="left:380px;top:202px" width="18" height="18" viewBox="0 0 18 18"><circle cx="7" cy="7" r="5.8" fill="#e4f2fa" stroke="#4a8ec8" stroke-width="1.5"/><path d="M11 11 L17 17" stroke="#3a7ab8" stroke-width="2.4" stroke-linecap="round"/></svg>
<div class="a" style="left:402px;top:199px;width:10px;height:20px;overflow:hidden"><div class="nw" style="font-size:15px;line-height:20px;color:#333">条件</div></div>
<div class="a" style="left:184px;top:238px;width:48px;height:28px;overflow:hidden;font-size:15px;line-height:19px;color:#222">人员输入</div>
<div class="a" style="left:252px;top:231px;width:104px;height:36px;background:#f7fbfe;border:1px solid #e3e7ea"></div>
<div class="a nw" style="left:257px;top:240px;width:95px;overflow:hidden;font-size:15px;line-height:18px;letter-spacing:0.5px;color:#9a9a9a">输入工号或姓</div>
<div class="a" style="left:359px;top:230px;width:64px;height:35px;background:#e9ecec;border:1px solid #d2d6d8"></div>
<div class="a nw" style="left:370px;top:235px;font-size:19.5px;line-height:23px;color:#555">清除</div>
<div class="a" style="left:359px;top:269px;width:64px;height:35px;background:#e9ecec;border:1px solid #d2d6d8"></div>
<div class="a nw" style="left:370px;top:274px;font-size:19.5px;line-height:23px;color:#555">全部</div>
<div class="a" style="left:189.5px;top:282.5px;width:15px;height:15px;border:2px solid #5a5a5a;background:#f7fbfe"></div>
<svg style="left:192px;top:285px" width="11" height="9" viewBox="0 0 11 9"><path d="M1.5 4 L4.5 7 L9.5 1.5" fill="none" stroke="#555" stroke-width="1.5"/></svg>
<div class="a nw" style="left:209px;top:281px;font-size:15px;line-height:18px;letter-spacing:0.5px;color:#222">全选</div>
<div class="a" style="left:248px;top:281.8px;width:16px;height:16px;border:2px solid #5a5a5a;border-radius:50%"></div>
<div class="a nw" style="left:269px;top:281px;font-size:15px;line-height:18px;letter-spacing:0.5px;color:#222">在职</div>
<div class="a" style="left:325px;top:281.8px;width:16px;height:16px;border:2px solid #5a5a5a;border-radius:50%"></div>
<div class="a" style="left:346px;top:281px;width:12px;height:20px;overflow:hidden"><div class="nw" style="font-size:15px;line-height:18px;color:#222">离职</div></div>
<div class="a" style="left:176px;top:308px;width:248px;height:457px;border-top:1px solid #c8c8c8;border-left:1px solid #c8c8c8;background:#f7fbfe"></div>
<div class="a" style="left:228px;top:312px;width:1px;height:27px;background:#b8b8b8"></div>
<div class="a" style="left:285px;top:312px;width:1px;height:27px;background:#b8b8b8"></div>
<div class="a" style="left:352px;top:312px;width:1px;height:27px;background:#b8b8b8"></div>
<div class="a nw" style="left:196px;top:312px;font-size:15px;line-height:17px;color:#111">90</div>
<div class="a nw" style="left:243px;top:314px;font-size:14.5px;line-height:17px;letter-spacing:0.5px;color:#111">工号</div>
<div class="a nw" style="left:305px;top:314px;font-size:14.5px;line-height:17px;letter-spacing:0.5px;color:#111">姓名</div>
<div class="a nw" style="left:369px;top:314px;font-size:14.5px;line-height:17px;letter-spacing:0.5px;color:#111">曾用名</div>
<div class="a" style="left:399px;top:309px;width:25px;height:456px;background:#f7fbfe"></div>
<div class="a" style="left:399px;top:310px;width:21px;height:86px;background:#e7ebec;border:1px solid #d4d8da"></div>
<div class="a" style="left:422px;top:309px;width:1px;height:456px;background:#dcdfe1"></div>
<div class="a" style="left:179px;top:339px;width:220px;height:426px;background:#3797f9"></div>
<div class="a" style="left:179px;top:339px;width:220px;height:1px;background:#c4c4c4"></div>
<div class="a nw" style="left:179px;top:341.5px;width:49px;text-align:center;font-size:15.5px;line-height:17px;color:#fff">1</div>
<div class="a nw" style="left:229.5px;top:343px;font-size:15.5px;line-height:17px;color:#fff">1</div>
<div class="a nw" style="left:286px;top:341.5px;font-size:14.8px;line-height:18px;color:#fff">黄<span class=ast>*</span>珍</div>
<div class="a" style="left:179px;top:370px;width:220px;height:1px;background:#c4c4c4"></div>
<div class="a nw" style="left:179px;top:372.5px;width:49px;text-align:center;font-size:15.5px;line-height:17px;color:#fff">2</div>
<div class="a nw" style="left:229.5px;top:374px;font-size:15.5px;line-height:17px;color:#fff">2</div>
<div class="a nw" style="left:286px;top:372.5px;font-size:14.8px;line-height:18px;color:#fff">姚<span class=ast>*</span>燕</div>
<div class="a" style="left:179px;top:401px;width:220px;height:1px;background:#c4c4c4"></div>
<div class="a nw" style="left:179px;top:403.5px;width:49px;text-align:center;font-size:15.5px;line-height:17px;color:#fff">3</div>
<div class="a nw" style="left:229.5px;top:405px;font-size:15.5px;line-height:17px;color:#fff">3</div>
<div class="a nw" style="left:286px;top:403.5px;font-size:14.8px;line-height:18px;color:#fff">廖<span class=ast>*</span>林</div>
<div class="a" style="left:179px;top:432px;width:220px;height:1px;background:#c4c4c4"></div>
<div class="a nw" style="left:179px;top:434.5px;width:49px;text-align:center;font-size:15.5px;line-height:17px;color:#fff">4</div>
<div class="a nw" style="left:229.5px;top:436px;font-size:15.5px;line-height:17px;color:#fff">4</div>
<div class="a nw" style="left:286px;top:434.5px;font-size:14.8px;line-height:18px;color:#fff">郭<span class=ast>*</span>连</div>
<div class="a" style="left:179px;top:463px;width:220px;height:1px;background:#c4c4c4"></div>
<div class="a nw" style="left:179px;top:465.5px;width:49px;text-align:center;font-size:15.5px;line-height:17px;color:#fff">5</div>
<div class="a nw" style="left:229.5px;top:467px;font-size:15.5px;line-height:17px;color:#fff">5</div>
<div class="a nw" style="left:286px;top:465.5px;font-size:14.8px;line-height:18px;color:#fff">孙<span class=ast>*</span>娜</div>
<div class="a" style="left:179px;top:494px;width:220px;height:1px;background:#c4c4c4"></div>
<div class="a nw" style="left:179px;top:496.5px;width:49px;text-align:center;font-size:15.5px;line-height:17px;color:#fff">6</div>
<div class="a nw" style="left:229.5px;top:498px;font-size:15.5px;line-height:17px;color:#fff">6</div>
<div class="a nw" style="left:286px;top:496.5px;font-size:14.8px;line-height:18px;color:#fff">周<span class=ast>*</span>杰</div>
<div class="a" style="left:179px;top:525px;width:220px;height:1px;background:#c4c4c4"></div>
<div class="a nw" style="left:179px;top:527.5px;width:49px;text-align:center;font-size:15.5px;line-height:17px;color:#fff">7</div>
<div class="a nw" style="left:229.5px;top:529px;font-size:15.5px;line-height:17px;color:#fff">7</div>
<div class="a nw" style="left:286px;top:527.5px;font-size:14.8px;line-height:18px;color:#fff">刘<span class=ast>*</span>明</div>
<div class="a" style="left:179px;top:556px;width:220px;height:1px;background:#c4c4c4"></div>
<div class="a nw" style="left:179px;top:558.5px;width:49px;text-align:center;font-size:15.5px;line-height:17px;color:#fff">8</div>
<div class="a nw" style="left:229.5px;top:560px;font-size:15.5px;line-height:17px;color:#fff">8</div>
<div class="a nw" style="left:286px;top:558.5px;font-size:14.8px;line-height:18px;color:#fff">孙<span class=ast>*</span>领</div>
<div class="a" style="left:179px;top:587px;width:220px;height:1px;background:#c4c4c4"></div>
<div class="a nw" style="left:179px;top:589.5px;width:49px;text-align:center;font-size:15.5px;line-height:17px;color:#fff">9</div>
<div class="a nw" style="left:229.5px;top:591px;font-size:15.5px;line-height:17px;color:#fff">9</div>
<div class="a nw" style="left:286px;top:589.5px;font-size:14.8px;line-height:18px;color:#fff">周<span class=ast>*</span>光</div>
<div class="a" style="left:179px;top:618px;width:220px;height:1px;background:#c4c4c4"></div>
<div class="a nw" style="left:179px;top:620.5px;width:49px;text-align:center;font-size:15.5px;line-height:17px;color:#fff">10</div>
<div class="a nw" style="left:229.5px;top:622px;font-size:15.5px;line-height:17px;color:#fff">10</div>
<div class="a nw" style="left:286px;top:620.5px;font-size:14.8px;line-height:18px;color:#fff">刘<span class=ast>*</span>丽</div>
<div class="a" style="left:179px;top:649px;width:220px;height:1px;background:#c4c4c4"></div>
<div class="a nw" style="left:179px;top:651.5px;width:49px;text-align:center;font-size:15.5px;line-height:17px;color:#fff">11</div>
<div class="a nw" style="left:229.5px;top:653px;font-size:15.5px;line-height:17px;color:#fff">11</div>
<div class="a nw" style="left:286px;top:651.5px;font-size:14.8px;line-height:18px;color:#fff">李<span class=ast>*</span></div>
<div class="a" style="left:179px;top:680px;width:220px;height:1px;background:#c4c4c4"></div>
<div class="a nw" style="left:179px;top:682.5px;width:49px;text-align:center;font-size:15.5px;line-height:17px;color:#fff">12</div>
<div class="a nw" style="left:229.5px;top:684px;font-size:15.5px;line-height:17px;color:#fff">12</div>
<div class="a nw" style="left:286px;top:682.5px;font-size:14.8px;line-height:18px;color:#fff">涂<span class=ast>*</span>元</div>
<div class="a" style="left:179px;top:711px;width:220px;height:1px;background:#c4c4c4"></div>
<div class="a nw" style="left:179px;top:713.5px;width:49px;text-align:center;font-size:15.5px;line-height:17px;color:#fff">13</div>
<div class="a nw" style="left:229.5px;top:715px;font-size:15.5px;line-height:17px;color:#fff">13</div>
<div class="a nw" style="left:286px;top:713.5px;font-size:14.8px;line-height:18px;color:#fff">周<span class=ast>*</span></div>
<div class="a" style="left:179px;top:742px;width:220px;height:1px;background:#c4c4c4"></div>
<div class="a nw" style="left:179px;top:744.5px;width:49px;text-align:center;font-size:15.5px;line-height:17px;color:#fff">14</div>
<div class="a nw" style="left:229.5px;top:746px;font-size:15.5px;line-height:17px;color:#fff">14</div>
<div class="a nw" style="left:286px;top:744.5px;font-size:14.8px;line-height:18px;color:#fff">胡<span class=ast>*</span>英</div>
<div class="a" style="left:179px;top:773px;width:220px;height:1px;background:#c4c4c4"></div>
<div class="a nw" style="left:179px;top:775.5px;width:49px;text-align:center;font-size:15.5px;line-height:17px;color:#fff">15</div>
<div class="a nw" style="left:229.5px;top:777px;font-size:15.5px;line-height:17px;color:#fff">15</div>
<div class="a nw" style="left:286px;top:775.5px;font-size:14.8px;line-height:18px;color:#fff">成<span class=ast>*</span></div>
<div class="a" style="left:228px;top:339px;width:1px;height:426px;background:#c4c4c4"></div>
<div class="a" style="left:285px;top:339px;width:1px;height:426px;background:#c4c4c4"></div>
<div class="a" style="left:352px;top:339px;width:1px;height:426px;background:#c4c4c4"></div>
<div class="a" style="left:430px;top:188px;width:869px;height:577px;background:#f7fbfe;border-top:1px solid #c8c8c8;border-left:1px solid #c8c8c8"></div>
<div class="a nw" style="left:434px;top:192px;font-size:14.5px;line-height:16px;letter-spacing:-0.3px;color:#111">90</div>
<div class="c" style="left:452px;top:194px;width:63px;font-size:15px;line-height:18px;color:#111">出勤日期</div>
<div class="c" style="left:519px;top:194px;width:33px;font-size:15px;line-height:18px;color:#111">工号</div>
<div class="c" style="left:556px;top:194px;width:33px;font-size:15px;line-height:18px;color:#111">姓名</div>
<div class="c" style="left:593px;top:194px;width:63px;font-size:15px;line-height:18px;color:#111">部门名称</div>
<div class="c" style="left:660px;top:194px;width:33px;font-size:15px;line-height:18px;color:#111">职务</div>
<div class="c" style="left:697px;top:194px;width:33px;font-size:15px;line-height:18px;color:#111">班次</div>
<div class="c" style="left:734px;top:194px;width:63px;font-size:15px;line-height:18px;color:#111">异常代码</div>
<div class="c" style="left:801px;top:194px;width:33px;font-size:15px;line-height:18px;color:#111">星期</div>
<div class="c" style="left:838px;top:194px;width:63px;font-size:15px;line-height:18px;color:#111">出勤天数</div>
<div class="c" style="left:905px;top:194px;width:78px;font-size:15px;line-height:18px;color:#111">应工作时数</div>
<div class="c" style="left:987px;top:194px;width:93px;font-size:15px;line-height:18px;color:#111">实际出勤时数</div>
<div class="c" style="left:1084px;top:194px;width:63px;font-size:15px;line-height:18px;color:#111">迟到次数</div>
<div class="c" style="left:1151px;top:194px;width:63px;font-size:15px;line-height:18px;color:#111">早退次数</div>
<div class="c" style="left:1218px;top:194px;width:61px;font-size:15px;line-height:18px;color:#111">旷工次数</div>
<div class="a" style="left:448px;top:192px;width:1px;height:34px;background:#b8b8b8"></div>
<div class="a" style="left:515px;top:192px;width:1px;height:34px;background:#b8b8b8"></div>
<div class="a" style="left:552px;top:192px;width:1px;height:34px;background:#b8b8b8"></div>
<div class="a" style="left:589px;top:192px;width:1px;height:34px;background:#b8b8b8"></div>
<div class="a" style="left:656px;top:192px;width:1px;height:34px;background:#b8b8b8"></div>
<div class="a" style="left:693px;top:192px;width:1px;height:34px;background:#b8b8b8"></div>
<div class="a" style="left:730px;top:192px;width:1px;height:34px;background:#b8b8b8"></div>
<div class="a" style="left:797px;top:192px;width:1px;height:34px;background:#b8b8b8"></div>
<div class="a" style="left:834px;top:192px;width:1px;height:34px;background:#b8b8b8"></div>
<div class="a" style="left:901px;top:192px;width:1px;height:34px;background:#b8b8b8"></div>
<div class="a" style="left:983px;top:192px;width:1px;height:34px;background:#b8b8b8"></div>
<div class="a" style="left:1080px;top:192px;width:1px;height:34px;background:#b8b8b8"></div>
<div class="a" style="left:1147px;top:192px;width:1px;height:34px;background:#b8b8b8"></div>
<div class="a" style="left:1214px;top:192px;width:1px;height:34px;background:#b8b8b8"></div>
<div class="a" style="left:1279px;top:191px;width:20px;height:137px;background:#e9eeef;border:1px solid #b8bcbe;border-right:none;border-top:none"></div>
<div class="a" style="left:433px;top:226px;width:846px;height:31px;background:#3797f9"></div>
<div class="a" style="left:431px;top:226px;width:848px;height:1px;background:#b4b4b4"></div>
<div class="c" style="left:432px;top:227px;width:16px;font-size:15.5px;line-height:17px;letter-spacing:-0.8px;color:#fff;text-align:center">1</div>
<div class="c" style="left:449.5px;top:229px;width:65.5px;font-size:15.5px;line-height:17px;color:#fff">2023/09/03</div>
<div class="c" style="left:517px;top:229px;width:35px;font-size:15.5px;line-height:17px;color:#fff">1</div>
<div class="c" style="left:554px;top:228px;width:35px;height:30px;white-space:normal;font-size:15px;line-height:19px;margin-top:-1px;color:#fff">黄<span class="ast">*</span><br>珍</div>
<div class="c" style="left:592px;top:229px;width:64px;font-size:15px;line-height:18px;color:#fff">包装</div>
<div class="c" style="left:658px;top:229px;width:35px;font-size:15px;line-height:18px;color:#fff">包装</div>
<div class="c" style="left:694.5px;top:229px;width:35.5px;font-size:15.5px;letter-spacing:-0.62px;line-height:17px;color:#fff">001003</div>
<div class="c" style="left:732px;top:229px;width:65px;font-size:15.5px;line-height:17px;color:#fff">3</div>
<div class="c" style="left:799px;top:229px;width:35px;font-size:15px;line-height:18px;color:#fff">日</div>
<div class="c" style="left:834px;top:229px;width:66.5px;text-align:right;font-family:'Liberation Serif',serif;font-size:16px;line-height:18px;color:#fff">0</div>
<div class="c" style="left:901px;top:229px;width:81.5px;text-align:right;font-family:'Liberation Serif',serif;font-size:16px;line-height:18px;color:#fff">0.00</div>
<div class="c" style="left:983px;top:229px;width:96.5px;text-align:right;font-family:'Liberation Serif',serif;font-size:16px;line-height:18px;color:#fff">0.00</div>
<div class="a" style="left:431px;top:257px;width:848px;height:1px;background:#b4b4b4"></div>
<div class="c" style="left:432px;top:258px;width:16px;font-size:15.5px;line-height:17px;letter-spacing:-0.8px;color:#000;text-align:center">2</div>
<div class="c" style="left:449.5px;top:260px;width:65.5px;font-size:15.5px;line-height:17px;color:#000">2023/09/03</div>
<div class="c" style="left:517px;top:260px;width:35px;font-size:15.5px;line-height:17px;color:#000">10</div>
<div class="c" style="left:554px;top:259px;width:35px;height:30px;white-space:normal;font-size:15px;line-height:19px;margin-top:-1px;color:#000">刘<span class="ast">*</span><br>丽</div>
<div class="c" style="left:592px;top:260px;width:64px;font-size:15px;line-height:18px;color:#000">后勤</div>
<div class="c" style="left:658px;top:260px;width:35px;font-size:15px;line-height:18px;color:#000">后勤</div>
<div class="c" style="left:694.5px;top:260px;width:35.5px;font-size:15.5px;letter-spacing:-0.62px;line-height:17px;color:#000">001003</div>
<div class="c" style="left:732px;top:260px;width:65px;font-size:15.5px;line-height:17px;color:#000">3</div>
<div class="c" style="left:799px;top:260px;width:35px;font-size:15px;line-height:18px;color:#000">日</div>
<div class="c" style="left:834px;top:260px;width:66.5px;text-align:right;font-family:'Liberation Serif',serif;font-size:16px;line-height:18px;color:#000">0</div>
<div class="c" style="left:901px;top:260px;width:81.5px;text-align:right;font-family:'Liberation Serif',serif;font-size:16px;line-height:18px;color:#000">0.00</div>
<div class="c" style="left:983px;top:260px;width:96.5px;text-align:right;font-family:'Liberation Serif',serif;font-size:16px;line-height:18px;color:#000">0.00</div>
<div class="a" style="left:431px;top:288px;width:848px;height:1px;background:#b4b4b4"></div>
<div class="c" style="left:432px;top:289px;width:16px;font-size:15.5px;line-height:17px;letter-spacing:-0.8px;color:#000;text-align:center">3</div>
<div class="c" style="left:449.5px;top:291px;width:65.5px;font-size:15.5px;line-height:17px;color:#000">2023/09/03</div>
<div class="c" style="left:517px;top:291px;width:35px;font-size:15.5px;line-height:17px;color:#000">100</div>
<div class="c" style="left:554px;top:290px;width:35px;height:30px;white-space:normal;font-size:15px;line-height:19px;margin-top:-1px;color:#000">张三</div>
<div class="c" style="left:592px;top:291px;width:64px;font-size:15px;line-height:18px;color:#000">包装</div>
<div class="c" style="left:658px;top:291px;width:35px;font-size:15px;line-height:18px;color:#000"></div>
<div class="c" style="left:694.5px;top:291px;width:35.5px;font-size:15.5px;letter-spacing:-0.62px;line-height:17px;color:#000">001003</div>
<div class="c" style="left:732px;top:291px;width:65px;font-size:15.5px;line-height:17px;color:#000">3</div>
<div class="c" style="left:799px;top:291px;width:35px;font-size:15px;line-height:18px;color:#000">日</div>
<div class="c" style="left:834px;top:291px;width:66.5px;text-align:right;font-family:'Liberation Serif',serif;font-size:16px;line-height:18px;color:#000">0</div>
<div class="c" style="left:901px;top:291px;width:81.5px;text-align:right;font-family:'Liberation Serif',serif;font-size:16px;line-height:18px;color:#000">0.00</div>
<div class="c" style="left:983px;top:291px;width:96.5px;text-align:right;font-family:'Liberation Serif',serif;font-size:16px;line-height:18px;color:#000">0.00</div>
<div class="a" style="left:431px;top:319px;width:848px;height:1px;background:#b4b4b4"></div>
<div class="c" style="left:432px;top:320px;width:16px;font-size:15.5px;line-height:17px;letter-spacing:-0.8px;color:#000;text-align:center">4</div>
<div class="c" style="left:449.5px;top:322px;width:65.5px;font-size:15.5px;line-height:17px;color:#000">2023/09/03</div>
<div class="c" style="left:517px;top:322px;width:35px;font-size:15.5px;line-height:17px;color:#000">11</div>
<div class="c" style="left:554px;top:321px;width:35px;height:30px;white-space:normal;font-size:15px;line-height:19px;margin-top:-1px;color:#000">李<span class="ast">*</span></div>
<div class="c" style="left:592px;top:322px;width:64px;font-size:15px;line-height:18px;color:#000">后勤</div>
<div class="c" style="left:658px;top:322px;width:35px;font-size:15px;line-height:18px;color:#000">后勤</div>
<div class="c" style="left:694.5px;top:322px;width:35.5px;font-size:15.5px;letter-spacing:-0.62px;line-height:17px;color:#000">001003</div>
<div class="c" style="left:732px;top:322px;width:65px;font-size:15.5px;line-height:17px;color:#000">3</div>
<div class="c" style="left:799px;top:322px;width:35px;font-size:15px;line-height:18px;color:#000">日</div>
<div class="c" style="left:834px;top:322px;width:66.5px;text-align:right;font-family:'Liberation Serif',serif;font-size:16px;line-height:18px;color:#000">0</div>
<div class="c" style="left:901px;top:322px;width:81.5px;text-align:right;font-family:'Liberation Serif',serif;font-size:16px;line-height:18px;color:#000">0.00</div>
<div class="c" style="left:983px;top:322px;width:96.5px;text-align:right;font-family:'Liberation Serif',serif;font-size:16px;line-height:18px;color:#000">0.00</div>
<div class="a" style="left:431px;top:350px;width:848px;height:1px;background:#b4b4b4"></div>
<div class="c" style="left:432px;top:351px;width:16px;font-size:15.5px;line-height:17px;letter-spacing:-0.8px;color:#000;text-align:center">5</div>
<div class="c" style="left:449.5px;top:353px;width:65.5px;font-size:15.5px;line-height:17px;color:#000">2023/09/03</div>
<div class="c" style="left:517px;top:353px;width:35px;font-size:15.5px;line-height:17px;color:#000">12</div>
<div class="c" style="left:554px;top:352px;width:35px;height:30px;white-space:normal;font-size:15px;line-height:19px;margin-top:-1px;color:#000">涂<span class="ast">*</span><br>元</div>
<div class="c" style="left:592px;top:353px;width:64px;font-size:15px;line-height:18px;color:#000">后勤</div>
<div class="c" style="left:658px;top:353px;width:35px;font-size:15px;line-height:18px;color:#000">后勤</div>
<div class="c" style="left:694.5px;top:353px;width:35.5px;font-size:15.5px;letter-spacing:-0.62px;line-height:17px;color:#000">001003</div>
<div class="c" style="left:732px;top:353px;width:65px;font-size:15.5px;line-height:17px;color:#000">3</div>
<div class="c" style="left:799px;top:353px;width:35px;font-size:15px;line-height:18px;color:#000">日</div>
<div class="c" style="left:834px;top:353px;width:66.5px;text-align:right;font-family:'Liberation Serif',serif;font-size:16px;line-height:18px;color:#000">0</div>
<div class="c" style="left:901px;top:353px;width:81.5px;text-align:right;font-family:'Liberation Serif',serif;font-size:16px;line-height:18px;color:#000">0.00</div>
<div class="c" style="left:983px;top:353px;width:96.5px;text-align:right;font-family:'Liberation Serif',serif;font-size:16px;line-height:18px;color:#000">0.00</div>
<div class="a" style="left:431px;top:381px;width:848px;height:1px;background:#b4b4b4"></div>
<div class="c" style="left:432px;top:382px;width:16px;font-size:15.5px;line-height:17px;letter-spacing:-0.8px;color:#000;text-align:center">6</div>
<div class="c" style="left:449.5px;top:384px;width:65.5px;font-size:15.5px;line-height:17px;color:#000">2023/09/03</div>
<div class="c" style="left:517px;top:384px;width:35px;font-size:15.5px;line-height:17px;color:#000">13</div>
<div class="c" style="left:554px;top:383px;width:35px;height:30px;white-space:normal;font-size:15px;line-height:19px;margin-top:-1px;color:#000">周<span class="ast">*</span></div>
<div class="c" style="left:592px;top:384px;width:64px;font-size:15px;line-height:18px;color:#000">后勤</div>
<div class="c" style="left:658px;top:384px;width:35px;font-size:15px;line-height:18px;color:#000">后勤</div>
<div class="c" style="left:694.5px;top:384px;width:35.5px;font-size:15.5px;letter-spacing:-0.62px;line-height:17px;color:#000">001003</div>
<div class="c" style="left:732px;top:384px;width:65px;font-size:15.5px;line-height:17px;color:#000">3</div>
<div class="c" style="left:799px;top:384px;width:35px;font-size:15px;line-height:18px;color:#000">日</div>
<div class="c" style="left:834px;top:384px;width:66.5px;text-align:right;font-family:'Liberation Serif',serif;font-size:16px;line-height:18px;color:#000">0</div>
<div class="c" style="left:901px;top:384px;width:81.5px;text-align:right;font-family:'Liberation Serif',serif;font-size:16px;line-height:18px;color:#000">0.00</div>
<div class="c" style="left:983px;top:384px;width:96.5px;text-align:right;font-family:'Liberation Serif',serif;font-size:16px;line-height:18px;color:#000">0.00</div>
<div class="a" style="left:431px;top:412px;width:848px;height:1px;background:#b4b4b4"></div>
<div class="c" style="left:432px;top:413px;width:16px;font-size:15.5px;line-height:17px;letter-spacing:-0.8px;color:#000;text-align:center">7</div>
<div class="c" style="left:449.5px;top:415px;width:65.5px;font-size:15.5px;line-height:17px;color:#000">2023/09/03</div>
<div class="c" style="left:517px;top:415px;width:35px;font-size:15.5px;line-height:17px;color:#000">14</div>
<div class="c" style="left:554px;top:414px;width:35px;height:30px;white-space:normal;font-size:15px;line-height:19px;margin-top:-1px;color:#000">胡<span class="ast">*</span><br>英</div>
<div class="c" style="left:592px;top:415px;width:64px;font-size:15px;line-height:18px;color:#000">后勤</div>
<div class="c" style="left:658px;top:415px;width:35px;font-size:15px;line-height:18px;color:#000">后勤</div>
<div class="c" style="left:694.5px;top:415px;width:35.5px;font-size:15.5px;letter-spacing:-0.62px;line-height:17px;color:#000">001003</div>
<div class="c" style="left:732px;top:415px;width:65px;font-size:15.5px;line-height:17px;color:#000">3</div>
<div class="c" style="left:799px;top:415px;width:35px;font-size:15px;line-height:18px;color:#000">日</div>
<div class="c" style="left:834px;top:415px;width:66.5px;text-align:right;font-family:'Liberation Serif',serif;font-size:16px;line-height:18px;color:#000">0</div>
<div class="c" style="left:901px;top:415px;width:81.5px;text-align:right;font-family:'Liberation Serif',serif;font-size:16px;line-height:18px;color:#000">0.00</div>
<div class="c" style="left:983px;top:415px;width:96.5px;text-align:right;font-family:'Liberation Serif',serif;font-size:16px;line-height:18px;color:#000">0.00</div>
<div class="a" style="left:431px;top:443px;width:848px;height:1px;background:#b4b4b4"></div>
<div class="c" style="left:432px;top:444px;width:16px;font-size:15.5px;line-height:17px;letter-spacing:-0.8px;color:#000;text-align:center">8</div>
<div class="c" style="left:449.5px;top:446px;width:65.5px;font-size:15.5px;line-height:17px;color:#000">2023/09/03</div>
<div class="c" style="left:517px;top:446px;width:35px;font-size:15.5px;line-height:17px;color:#000">15</div>
<div class="c" style="left:554px;top:445px;width:35px;height:30px;white-space:normal;font-size:15px;line-height:19px;margin-top:-1px;color:#000">成<span class="ast">*</span><br>美</div>
<div class="c" style="left:592px;top:446px;width:64px;font-size:15px;line-height:18px;color:#000">后勤</div>
<div class="c" style="left:658px;top:446px;width:35px;font-size:15px;line-height:18px;color:#000">后勤</div>
<div class="c" style="left:694.5px;top:446px;width:35.5px;font-size:15.5px;letter-spacing:-0.62px;line-height:17px;color:#000">001003</div>
<div class="c" style="left:732px;top:446px;width:65px;font-size:15.5px;line-height:17px;color:#000">3</div>
<div class="c" style="left:799px;top:446px;width:35px;font-size:15px;line-height:18px;color:#000">日</div>
<div class="c" style="left:834px;top:446px;width:66.5px;text-align:right;font-family:'Liberation Serif',serif;font-size:16px;line-height:18px;color:#000">0</div>
<div class="c" style="left:901px;top:446px;width:81.5px;text-align:right;font-family:'Liberation Serif',serif;font-size:16px;line-height:18px;color:#000">0.00</div>
<div class="c" style="left:983px;top:446px;width:96.5px;text-align:right;font-family:'Liberation Serif',serif;font-size:16px;line-height:18px;color:#000">0.00</div>
<div class="a" style="left:431px;top:474px;width:848px;height:1px;background:#b4b4b4"></div>
<div class="c" style="left:432px;top:475px;width:16px;font-size:15.5px;line-height:17px;letter-spacing:-0.8px;color:#000;text-align:center">9</div>
<div class="c" style="left:449.5px;top:477px;width:65.5px;font-size:15.5px;line-height:17px;color:#000">2023/09/03</div>
<div class="c" style="left:517px;top:477px;width:35px;font-size:15.5px;line-height:17px;color:#000">16</div>
<div class="c" style="left:554px;top:476px;width:35px;height:30px;white-space:normal;font-size:15px;line-height:19px;margin-top:-1px;color:#000">易<span class="ast">*</span><br>林</div>
<div class="c" style="left:592px;top:477px;width:64px;font-size:15px;line-height:18px;color:#000">后勤</div>
<div class="c" style="left:658px;top:477px;width:35px;font-size:15px;line-height:18px;color:#000">后勤</div>
<div class="c" style="left:694.5px;top:477px;width:35.5px;font-size:15.5px;letter-spacing:-0.62px;line-height:17px;color:#000">001003</div>
<div class="c" style="left:732px;top:477px;width:65px;font-size:15.5px;line-height:17px;color:#000">3</div>
<div class="c" style="left:799px;top:477px;width:35px;font-size:15px;line-height:18px;color:#000">日</div>
<div class="c" style="left:834px;top:477px;width:66.5px;text-align:right;font-family:'Liberation Serif',serif;font-size:16px;line-height:18px;color:#000">0</div>
<div class="c" style="left:901px;top:477px;width:81.5px;text-align:right;font-family:'Liberation Serif',serif;font-size:16px;line-height:18px;color:#000">0.00</div>
<div class="c" style="left:983px;top:477px;width:96.5px;text-align:right;font-family:'Liberation Serif',serif;font-size:16px;line-height:18px;color:#000">0.00</div>
<div class="a" style="left:431px;top:505px;width:848px;height:1px;background:#b4b4b4"></div>
<div class="c" style="left:432px;top:506px;width:16px;font-size:15.5px;line-height:17px;letter-spacing:-0.8px;color:#000;text-align:left">10</div>
<div class="c" style="left:449.5px;top:508px;width:65.5px;font-size:15.5px;line-height:17px;color:#000">2023/09/03</div>
<div class="c" style="left:517px;top:508px;width:35px;font-size:15.5px;line-height:17px;color:#000">17</div>
<div class="c" style="left:554px;top:507px;width:35px;height:30px;white-space:normal;font-size:15px;line-height:19px;margin-top:-1px;color:#000">罗<span class="ast">*</span><br>初</div>
<div class="c" style="left:592px;top:508px;width:64px;font-size:15px;line-height:18px;color:#000">精工</div>
<div class="c" style="left:658px;top:508px;width:35px;font-size:15px;line-height:18px;color:#000">精工</div>
<div class="c" style="left:694.5px;top:508px;width:35.5px;font-size:15.5px;letter-spacing:-0.62px;line-height:17px;color:#000">001003</div>
<div class="c" style="left:732px;top:508px;width:65px;font-size:15.5px;line-height:17px;color:#000">3</div>
<div class="c" style="left:799px;top:508px;width:35px;font-size:15px;line-height:18px;color:#000">日</div>
<div class="c" style="left:834px;top:508px;width:66.5px;text-align:right;font-family:'Liberation Serif',serif;font-size:16px;line-height:18px;color:#000">0</div>
<div class="c" style="left:901px;top:508px;width:81.5px;text-align:right;font-family:'Liberation Serif',serif;font-size:16px;line-height:18px;color:#000">0.00</div>
<div class="c" style="left:983px;top:508px;width:96.5px;text-align:right;font-family:'Liberation Serif',serif;font-size:16px;line-height:18px;color:#000">0.00</div>
<div class="a" style="left:431px;top:536px;width:848px;height:1px;background:#b4b4b4"></div>
<div class="c" style="left:432px;top:537px;width:16px;font-size:15.5px;line-height:17px;letter-spacing:-0.8px;color:#000;text-align:left">11</div>
<div class="c" style="left:449.5px;top:539px;width:65.5px;font-size:15.5px;line-height:17px;color:#000">2023/09/03</div>
<div class="c" style="left:517px;top:539px;width:35px;font-size:15.5px;line-height:17px;color:#000">18</div>
<div class="c" style="left:554px;top:538px;width:35px;height:30px;white-space:normal;font-size:15px;line-height:19px;margin-top:-1px;color:#000">王<span class="ast">*</span><br>成</div>
<div class="c" style="left:592px;top:539px;width:64px;font-size:15px;line-height:18px;color:#000">精工</div>
<div class="c" style="left:658px;top:539px;width:35px;font-size:15px;line-height:18px;color:#000">精工</div>
<div class="c" style="left:694.5px;top:539px;width:35.5px;font-size:15.5px;letter-spacing:-0.62px;line-height:17px;color:#000">001003</div>
<div class="c" style="left:732px;top:539px;width:65px;font-size:15.5px;line-height:17px;color:#000">3</div>
<div class="c" style="left:799px;top:539px;width:35px;font-size:15px;line-height:18px;color:#000">日</div>
<div class="c" style="left:834px;top:539px;width:66.5px;text-align:right;font-family:'Liberation Serif',serif;font-size:16px;line-height:18px;color:#000">0</div>
<div class="c" style="left:901px;top:539px;width:81.5px;text-align:right;font-family:'Liberation Serif',serif;font-size:16px;line-height:18px;color:#000">0.00</div>
<div class="c" style="left:983px;top:539px;width:96.5px;text-align:right;font-family:'Liberation Serif',serif;font-size:16px;line-height:18px;color:#000">0.00</div>
<div class="a" style="left:431px;top:567px;width:848px;height:1px;background:#b4b4b4"></div>
<div class="c" style="left:432px;top:568px;width:16px;font-size:15.5px;line-height:17px;letter-spacing:-0.8px;color:#000;text-align:left">12</div>
<div class="c" style="left:449.5px;top:570px;width:65.5px;font-size:15.5px;line-height:17px;color:#000">2023/09/03</div>
<div class="c" style="left:517px;top:570px;width:35px;font-size:15.5px;line-height:17px;color:#000">19</div>
<div class="c" style="left:554px;top:569px;width:35px;height:30px;white-space:normal;font-size:15px;line-height:19px;margin-top:-1px;color:#000">李<span class="ast">*</span></div>
<div class="c" style="left:592px;top:570px;width:64px;font-size:15px;line-height:18px;color:#000">精工</div>
<div class="c" style="left:658px;top:570px;width:35px;font-size:15px;line-height:18px;color:#000">精工</div>
<div class="c" style="left:694.5px;top:570px;width:35.5px;font-size:15.5px;letter-spacing:-0.62px;line-height:17px;color:#000">001003</div>
<div class="c" style="left:732px;top:570px;width:65px;font-size:15.5px;line-height:17px;color:#000">3</div>
<div class="c" style="left:799px;top:570px;width:35px;font-size:15px;line-height:18px;color:#000">日</div>
<div class="c" style="left:834px;top:570px;width:66.5px;text-align:right;font-family:'Liberation Serif',serif;font-size:16px;line-height:18px;color:#000">0</div>
<div class="c" style="left:901px;top:570px;width:81.5px;text-align:right;font-family:'Liberation Serif',serif;font-size:16px;line-height:18px;color:#000">0.00</div>
<div class="c" style="left:983px;top:570px;width:96.5px;text-align:right;font-family:'Liberation Serif',serif;font-size:16px;line-height:18px;color:#000">0.00</div>
<div class="a" style="left:431px;top:598px;width:848px;height:1px;background:#b4b4b4"></div>
<div class="c" style="left:432px;top:599px;width:16px;font-size:15.5px;line-height:17px;letter-spacing:-0.8px;color:#000;text-align:left">13</div>
<div class="c" style="left:449.5px;top:601px;width:65.5px;font-size:15.5px;line-height:17px;color:#000">2023/09/03</div>
<div class="c" style="left:517px;top:601px;width:35px;font-size:15.5px;line-height:17px;color:#000">2</div>
<div class="c" style="left:554px;top:600px;width:35px;height:30px;white-space:normal;font-size:15px;line-height:19px;margin-top:-1px;color:#000">姚<span class="ast">*</span><br>燕</div>
<div class="c" style="left:592px;top:601px;width:64px;font-size:15px;line-height:18px;color:#000">包装</div>
<div class="c" style="left:658px;top:601px;width:35px;font-size:15px;line-height:18px;color:#000">包装</div>
<div class="c" style="left:694.5px;top:601px;width:35.5px;font-size:15.5px;letter-spacing:-0.62px;line-height:17px;color:#000">001003</div>
<div class="c" style="left:732px;top:601px;width:65px;font-size:15.5px;line-height:17px;color:#000">3</div>
<div class="c" style="left:799px;top:601px;width:35px;font-size:15px;line-height:18px;color:#000">日</div>
<div class="c" style="left:834px;top:601px;width:66.5px;text-align:right;font-family:'Liberation Serif',serif;font-size:16px;line-height:18px;color:#000">0</div>
<div class="c" style="left:901px;top:601px;width:81.5px;text-align:right;font-family:'Liberation Serif',serif;font-size:16px;line-height:18px;color:#000">0.00</div>
<div class="c" style="left:983px;top:601px;width:96.5px;text-align:right;font-family:'Liberation Serif',serif;font-size:16px;line-height:18px;color:#000">0.00</div>
<div class="a" style="left:431px;top:629px;width:848px;height:1px;background:#b4b4b4"></div>
<div class="c" style="left:432px;top:630px;width:16px;font-size:15.5px;line-height:17px;letter-spacing:-0.8px;color:#000;text-align:left">14</div>
<div class="c" style="left:449.5px;top:632px;width:65.5px;font-size:15.5px;line-height:17px;color:#000">2023/09/03</div>
<div class="c" style="left:517px;top:632px;width:35px;font-size:15.5px;line-height:17px;color:#000">20</div>
<div class="c" style="left:554px;top:631px;width:35px;height:30px;white-space:normal;font-size:15px;line-height:19px;margin-top:-1px;color:#000">刘<span class="ast">*</span></div>
<div class="c" style="left:592px;top:632px;width:64px;font-size:15px;line-height:18px;color:#000">精工</div>
<div class="c" style="left:658px;top:632px;width:35px;font-size:15px;line-height:18px;color:#000">精工</div>
<div class="c" style="left:694.5px;top:632px;width:35.5px;font-size:15.5px;letter-spacing:-0.62px;line-height:17px;color:#000">001003</div>
<div class="c" style="left:732px;top:632px;width:65px;font-size:15.5px;line-height:17px;color:#000">3</div>
<div class="c" style="left:799px;top:632px;width:35px;font-size:15px;line-height:18px;color:#000">日</div>
<div class="c" style="left:834px;top:632px;width:66.5px;text-align:right;font-family:'Liberation Serif',serif;font-size:16px;line-height:18px;color:#000">0</div>
<div class="c" style="left:901px;top:632px;width:81.5px;text-align:right;font-family:'Liberation Serif',serif;font-size:16px;line-height:18px;color:#000">0.00</div>
<div class="c" style="left:983px;top:632px;width:96.5px;text-align:right;font-family:'Liberation Serif',serif;font-size:16px;line-height:18px;color:#000">0.00</div>
<div class="a" style="left:431px;top:660px;width:848px;height:1px;background:#b4b4b4"></div>
<div class="c" style="left:432px;top:661px;width:16px;font-size:15.5px;line-height:17px;letter-spacing:-0.8px;color:#000;text-align:left">15</div>
<div class="c" style="left:449.5px;top:663px;width:65.5px;font-size:15.5px;line-height:17px;color:#000">2023/09/03</div>
<div class="c" style="left:517px;top:663px;width:35px;font-size:15.5px;line-height:17px;color:#000">21</div>
<div class="c" style="left:554px;top:662px;width:35px;height:30px;white-space:normal;font-size:15px;line-height:19px;margin-top:-1px;color:#000">向<span class="ast">*</span></div>
<div class="c" style="left:592px;top:663px;width:64px;font-size:15px;line-height:18px;color:#000">精工</div>
<div class="c" style="left:658px;top:663px;width:35px;font-size:15px;line-height:18px;color:#000">精工</div>
<div class="c" style="left:694.5px;top:663px;width:35.5px;font-size:15.5px;letter-spacing:-0.62px;line-height:17px;color:#000">001003</div>
<div class="c" style="left:732px;top:663px;width:65px;font-size:15.5px;line-height:17px;color:#000">3</div>
<div class="c" style="left:799px;top:663px;width:35px;font-size:15px;line-height:18px;color:#000">日</div>
<div class="c" style="left:834px;top:663px;width:66.5px;text-align:right;font-family:'Liberation Serif',serif;font-size:16px;line-height:18px;color:#000">0</div>
<div class="c" style="left:901px;top:663px;width:81.5px;text-align:right;font-family:'Liberation Serif',serif;font-size:16px;line-height:18px;color:#000">0.00</div>
<div class="c" style="left:983px;top:663px;width:96.5px;text-align:right;font-family:'Liberation Serif',serif;font-size:16px;line-height:18px;color:#000">0.00</div>
<div class="a" style="left:431px;top:691px;width:848px;height:1px;background:#b4b4b4"></div>
<div class="c" style="left:432px;top:692px;width:16px;font-size:15.5px;line-height:17px;letter-spacing:-0.8px;color:#000;text-align:left">16</div>
<div class="c" style="left:449.5px;top:694px;width:65.5px;font-size:15.5px;line-height:17px;color:#000">2023/09/03</div>
<div class="c" style="left:517px;top:694px;width:35px;font-size:15.5px;line-height:17px;color:#000">22</div>
<div class="c" style="left:554px;top:693px;width:35px;height:30px;white-space:normal;font-size:15px;line-height:19px;margin-top:-1px;color:#000">易<span class="ast">*</span><br>元</div>
<div class="c" style="left:592px;top:694px;width:64px;font-size:15px;line-height:18px;color:#000">精工</div>
<div class="c" style="left:658px;top:694px;width:35px;font-size:15px;line-height:18px;color:#000">精工</div>
<div class="c" style="left:694.5px;top:694px;width:35.5px;font-size:15.5px;letter-spacing:-0.62px;line-height:17px;color:#000">001003</div>
<div class="c" style="left:732px;top:694px;width:65px;font-size:15.5px;line-height:17px;color:#000">3</div>
<div class="c" style="left:799px;top:694px;width:35px;font-size:15px;line-height:18px;color:#000">日</div>
<div class="c" style="left:834px;top:694px;width:66.5px;text-align:right;font-family:'Liberation Serif',serif;font-size:16px;line-height:18px;color:#000">0</div>
<div class="c" style="left:901px;top:694px;width:81.5px;text-align:right;font-family:'Liberation Serif',serif;font-size:16px;line-height:18px;color:#000">0.00</div>
<div class="c" style="left:983px;top:694px;width:96.5px;text-align:right;font-family:'Liberation Serif',serif;font-size:16px;line-height:18px;color:#000">0.00</div>
<div class="a" style="left:431px;top:722px;width:848px;height:1px;background:#b4b4b4"></div>
<div class="c" style="left:432px;top:723px;width:16px;font-size:15.5px;line-height:17px;letter-spacing:-0.8px;color:#000;text-align:left">17</div>
<div class="c" style="left:449.5px;top:725px;width:65.5px;font-size:15.5px;line-height:17px;color:#000">2023/09/03</div>
<div class="c" style="left:517px;top:725px;width:35px;font-size:15.5px;line-height:17px;color:#000">23</div>
<div class="c" style="left:554px;top:724px;width:35px;height:30px;white-space:normal;font-size:15px;line-height:19px;margin-top:-1px;color:#000">王<span class="ast">*</span><br>鹏</div>
<div class="c" style="left:592px;top:725px;width:64px;font-size:15px;line-height:18px;color:#000">精工</div>
<div class="c" style="left:658px;top:725px;width:35px;font-size:15px;line-height:18px;color:#000">精工</div>
<div class="c" style="left:694.5px;top:725px;width:35.5px;font-size:15.5px;letter-spacing:-0.62px;line-height:17px;color:#000">001003</div>
<div class="c" style="left:732px;top:725px;width:65px;font-size:15.5px;line-height:17px;color:#000">3</div>
<div class="c" style="left:799px;top:725px;width:35px;font-size:15px;line-height:18px;color:#000">日</div>
<div class="c" style="left:834px;top:725px;width:66.5px;text-align:right;font-family:'Liberation Serif',serif;font-size:16px;line-height:18px;color:#000">0</div>
<div class="c" style="left:901px;top:725px;width:81.5px;text-align:right;font-family:'Liberation Serif',serif;font-size:16px;line-height:18px;color:#000">0.00</div>
<div class="c" style="left:983px;top:725px;width:96.5px;text-align:right;font-family:'Liberation Serif',serif;font-size:16px;line-height:18px;color:#000">0.00</div>
<div class="a" style="left:431px;top:753px;width:848px;height:1px;background:#b4b4b4"></div>
<div class="c" style="left:432px;top:754px;width:16px;font-size:15.5px;line-height:17px;letter-spacing:-0.8px;color:#000;text-align:left">18</div>
<div class="c" style="left:449.5px;top:756px;width:65.5px;font-size:15.5px;line-height:17px;color:#000">2023/09/03</div>
<div class="c" style="left:517px;top:756px;width:35px;font-size:15.5px;line-height:17px;color:#000">24</div>
<div class="c" style="left:554px;top:755px;width:35px;height:30px;white-space:normal;font-size:15px;line-height:19px;margin-top:-1px;color:#000">龚<span class="ast">*</span><br>明</div>
<div class="c" style="left:592px;top:756px;width:64px;font-size:15px;line-height:18px;color:#000">精工</div>
<div class="c" style="left:658px;top:756px;width:35px;font-size:15px;line-height:18px;color:#000">精工</div>
<div class="c" style="left:694.5px;top:756px;width:35.5px;font-size:15.5px;letter-spacing:-0.62px;line-height:17px;color:#000">001003</div>
<div class="c" style="left:732px;top:756px;width:65px;font-size:15.5px;line-height:17px;color:#000">3</div>
<div class="c" style="left:799px;top:756px;width:35px;font-size:15px;line-height:18px;color:#000">日</div>
<div class="c" style="left:834px;top:756px;width:66.5px;text-align:right;font-family:'Liberation Serif',serif;font-size:16px;line-height:18px;color:#000">0</div>
<div class="c" style="left:901px;top:756px;width:81.5px;text-align:right;font-family:'Liberation Serif',serif;font-size:16px;line-height:18px;color:#000">0.00</div>
<div class="c" style="left:983px;top:756px;width:96.5px;text-align:right;font-family:'Liberation Serif',serif;font-size:16px;line-height:18px;color:#000">0.00</div>
<div class="a" style="left:448px;top:226px;width:1px;height:539px;background:#b4b4b4"></div>
<div class="a" style="left:515px;top:226px;width:1px;height:539px;background:#b4b4b4"></div>
<div class="a" style="left:552px;top:226px;width:1px;height:539px;background:#b4b4b4"></div>
<div class="a" style="left:589px;top:226px;width:1px;height:539px;background:#b4b4b4"></div>
<div class="a" style="left:656px;top:226px;width:1px;height:539px;background:#b4b4b4"></div>
<div class="a" style="left:693px;top:226px;width:1px;height:539px;background:#b4b4b4"></div>
<div class="a" style="left:730px;top:226px;width:1px;height:539px;background:#b4b4b4"></div>
<div class="a" style="left:797px;top:226px;width:1px;height:539px;background:#b4b4b4"></div>
<div class="a" style="left:834px;top:226px;width:1px;height:539px;background:#b4b4b4"></div>
<div class="a" style="left:901px;top:226px;width:1px;height:539px;background:#b4b4b4"></div>
<div class="a" style="left:983px;top:226px;width:1px;height:539px;background:#b4b4b4"></div>
<div class="a" style="left:1080px;top:226px;width:1px;height:539px;background:#b4b4b4"></div>
<div class="a" style="left:1147px;top:226px;width:1px;height:539px;background:#b4b4b4"></div>
<div class="a" style="left:1214px;top:226px;width:1px;height:539px;background:#b4b4b4"></div>
<div class="a" style="left:1279px;top:327px;width:1px;height:438px;background:#e8ecee"></div>
<svg style="left:561px;top:462px" width="21" height="26" viewBox="0 0 21 26"><path d="M7 16 V3 Q7 1 8.7 1 Q10.4 1 10.4 3 V9.5 Q10.6 8 12.2 8 Q13.8 8 13.8 10 Q14.2 9 15.6 9 Q17.2 9 17.2 11 Q17.8 10.5 18.6 10.5 Q20 10.6 20 12.5 V18 Q20 24.5 13 24.5 Q9 24.5 6.5 21 L1.8 15.5 Q0.8 14 2.2 13 Q3.5 12.3 4.8 13.5 Z" fill="#fff" stroke="#1a1f4a" stroke-width="1.1" stroke-linejoin="round"/><path d="M10.4 9.5 V14 M13.8 10 V14 M17.2 11 V14" stroke="#1a1f4a" stroke-width="0.9"/></svg>
<div class="a" style="left:0;top:0;width:1px;height:765px;background:#a9adb0"></div></body></html>
